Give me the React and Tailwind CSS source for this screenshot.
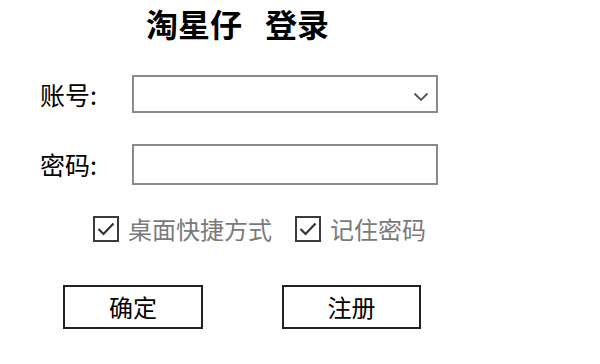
import React, { useState } from 'react';

function CheckBox({ checked, onChange, label }) {
  return (
    <label className="flex items-center gap-[9px] cursor-pointer select-none">
      <span
        className="w-[26px] h-[26px] border-2 border-[#3a3a3a] bg-white flex items-center justify-center"
        onClick={onChange}
      >
        {checked && (
          <svg width="20" height="20" viewBox="0 0 20 20" fill="none">
            <path d="M2.5 10 L7.5 15 L17.5 4.5" stroke="#333" strokeWidth="2.2" />
          </svg>
        )}
      </span>
      <span className="text-[24px] leading-none text-[#7a7a7a]">{label}</span>
    </label>
  );
}

export default function App() {
  const [account, setAccount] = useState('');
  const [password, setPassword] = useState('');
  const [shortcut, setShortcut] = useState(true);
  const [remember, setRemember] = useState(true);

  return (
    <div
      className="w-[600px] h-[364px] bg-white text-black overflow-hidden"
      style={{ fontFamily: '"Noto Sans CJK SC", "Noto Sans", sans-serif' }}
    >
      <h1 className="pt-[5px] pl-[146px] flex text-[32px] leading-[36px] font-bold">
        <span>淘星仔</span>
        <span className="ml-[23px]">登录</span>
      </h1>

      <div className="mt-[34px] flex items-center pl-[40px]">
        <span className="w-[92px] text-[25px] leading-none">账号:</span>
        <div className="relative w-[306px] h-[38px] border-2 border-[#8a8a8a] bg-white">
          <input
            className="w-full h-full px-2 text-[20px] outline-none bg-transparent"
            value={account}
            onChange={e => setAccount(e.target.value)}
          />
          <svg
            className="absolute right-[7px] top-[15px]"
            width="16"
            height="10"
            viewBox="0 0 16 10"
            fill="none"
          >
            <path d="M1.5 1.5 L8 8 L14.5 1.5" stroke="#555" strokeWidth="1.8" />
          </svg>
        </div>
      </div>

      <div className="mt-[31px] flex items-center pl-[40px]">
        <span className="w-[92px] text-[25px] leading-none">密码:</span>
        <input
          type="password"
          className="w-[306px] h-[41px] px-2 border-2 border-[#8a8a8a] text-[20px] outline-none"
          value={password}
          onChange={e => setPassword(e.target.value)}
        />
      </div>

      <div className="mt-[31px] flex items-center pl-[93px] gap-[23px]">
        <CheckBox checked={shortcut} onChange={() => setShortcut(!shortcut)} label="桌面快捷方式" />
        <CheckBox checked={remember} onChange={() => setRemember(!remember)} label="记住密码" />
      </div>

      <div className="mt-[43px] flex pl-[63px] gap-[79px]">
        <button className="w-[140px] h-[44px] border-2 border-[#222] bg-white text-[24px]">确定</button>
        <button className="w-[139px] h-[44px] border-2 border-[#222] bg-white text-[24px]">注册</button>
      </div>
    </div>
  );
}
